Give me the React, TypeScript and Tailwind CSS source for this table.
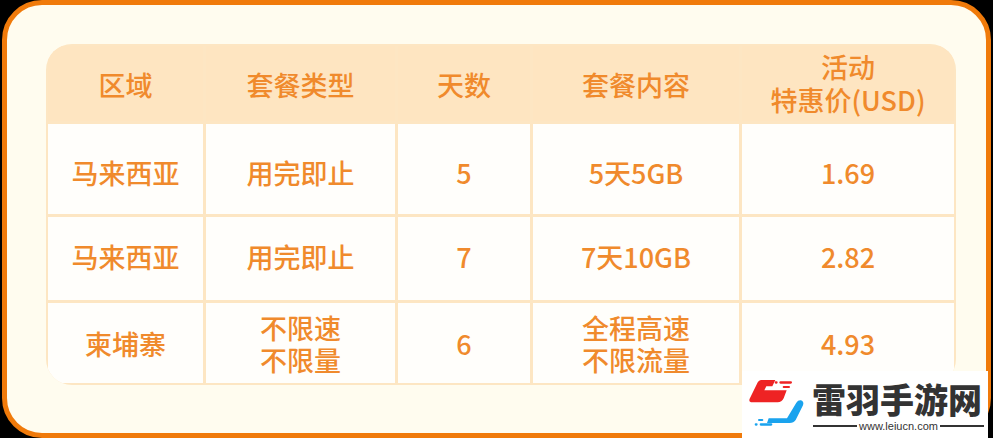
import React from "react";

const cols = ["区域", "套餐类型", "天数", "套餐内容"];

const rows: { h: string; pad: string; cells: string[][] }[] = [
  { h: "h-[90px]", pad: "pt-[7px]", cells: [["马来西亚"], ["用完即止"], ["5"], ["5天5GB"], ["1.69"]] },
  { h: "h-[83px]", pad: "pb-[3px]", cells: [["马来西亚"], ["用完即止"], ["7"], ["7天10GB"], ["2.82"]] },
  { h: "h-[80px]", pad: "pt-[2px]", cells: [["柬埔寨"], ["不限速", "不限量"], ["6"], ["全程高速", "不限流量"], ["4.93"]] },
];

function Logo() {
  return (
    <svg viewBox="0 0 192 198" width="64" height="66" className="absolute left-[6px] top-[1px]">
      <path
        d="M40 24 L82 24 L73 43 L55 43 L49 55 L116 55 L107 79 Q101 91 89 91 L13 91 Q1 91 5 80 L27 35 Q32 24 40 24 Z"
        fill="#ee2324"
      />
      <rect x="80" y="28" width="9" height="7" rx="3.5" fill="#ee2324" />
      <rect x="94" y="28" width="38" height="7" rx="3.5" fill="#ee2324" />
      <rect x="104" y="42" width="22" height="6" rx="3" fill="#ee2324" />
      <path
        d="M145 92 Q150 84 159 85 Q169 89 165 100 L143 144 Q137 153 125 153 L57 153 L62 139 L117 139 Z"
        fill="#1aa3ee"
      />
      <rect x="20" y="154" width="9" height="7" rx="3.5" fill="#1aa3ee" />
      <rect x="35" y="154" width="38" height="7" rx="3.5" fill="#1aa3ee" />
      <rect x="30" y="141" width="16" height="6" rx="3" fill="#1aa3ee" />
    </svg>
  );
}

export default function App() {
  return (
    <div className="relative w-[993px] h-[438px] bg-black overflow-hidden font-['Noto_Sans_CJK_SC','Noto_Sans',sans-serif]">
      <div className="ml-[2px] w-[989px] h-[438px] rounded-[40px] border-[5px] border-[#f07a0a] bg-[#fffcef] pl-[39px] pt-[39px]">
        <div className="w-[910px] rounded-[26px] overflow-hidden bg-[#fde6c3] p-[2px]">
          <div className="grid grid-cols-[155px_189px_132px_206px_212px] gap-[3px] text-[#f08a2c] text-[27px] font-medium leading-[33px]">
            {cols.map((c) => (
              <div key={c} className="h-[75px] bg-[#fee5c1] flex items-center justify-center pt-[2px]">
                {c}
              </div>
            ))}
            <div className="h-[75px] bg-[#fee5c1] flex items-center justify-center pb-[2px] text-center">
              <p>
                活动
                <br />
                特惠价(USD)
              </p>
            </div>
            {rows.map((r, i) =>
              r.cells.map((cell, j) => (
                <div
                  key={`${i}-${j}`}
                  className={`${r.h} ${r.pad} bg-[#fffefb] flex items-center justify-center text-center`}
                >
                  <p className="leading-[32px]">
                    {cell.map((t, k) => (
                      <React.Fragment key={t}>
                        {k > 0 && <br />}
                        {t}
                      </React.Fragment>
                    ))}
                  </p>
                </div>
              ))
            )}
          </div>
        </div>
      </div>

      {/* watermark */}
      <div className="absolute left-[742px] top-[371px] w-[246px] h-[67px] bg-white">
        <Logo />
        <div className="absolute left-[70px] top-[8px] text-[34px] leading-[40px] font-black text-[#333333] font-['Noto_Sans_CJK_SC',serif]">
          雷羽手游网
        </div>
        <div className="absolute left-[71px] top-[48px] w-[171px] flex items-center gap-[2px]">
          <div className="flex-1 h-[2px] bg-[#333333]" />
          <span className="text-[11px] leading-[14px] text-[#333333] font-['Liberation_Sans',sans-serif]">
            www.leiucn.com
          </span>
          <div className="flex-1 h-[2px] bg-[#333333]" />
        </div>
      </div>
    </div>
  );
}
